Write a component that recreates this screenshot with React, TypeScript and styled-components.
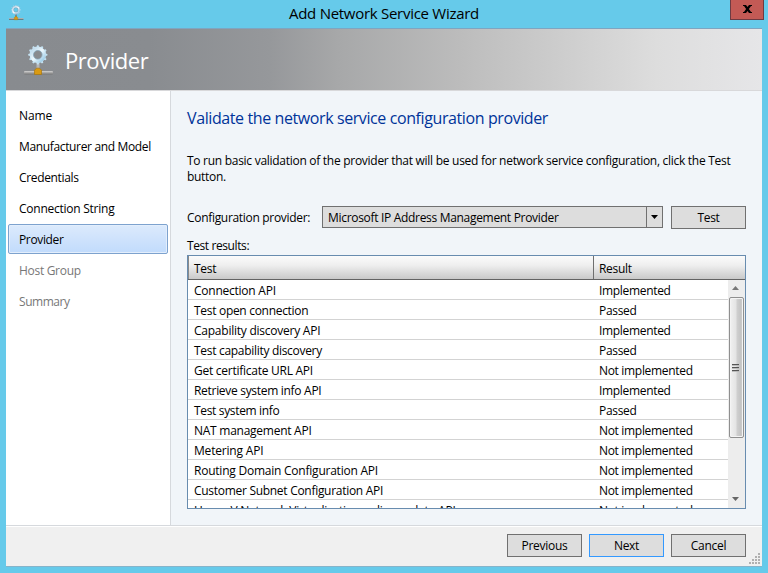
import React from "react";
import styled, { createGlobalStyle, css } from "styled-components";

const GlobalStyle = createGlobalStyle`
  * { box-sizing: border-box; }
  body { margin: 0; background: #66caea; }
  button { font: inherit; letter-spacing: inherit; color: inherit; }
`;

const Window = styled.div`
  width: 768px;
  height: 573px;
  display: flex;
  flex-direction: column;
  background: #66caea;
  padding: 0 6px 6px;
  overflow: hidden;
  font-family: "Open Sans", "Noto Sans", sans-serif;
  font-size: 12px;
  line-height: 16px;
  letter-spacing: -0.3px;
  color: #000;
`;

const Label = styled.span<{ $track?: number }>`
  white-space: pre;
  letter-spacing: ${(p) => p.$track ?? -0.3}px;
`;

const TitleBar = styled.header`
  flex: none;
  height: 28px;
  display: grid;
  grid-template-columns: 34px 1fr 34px;
  margin: 0 -2px 0 0;
`;

const TitleIcon = styled.div`
  padding: 4px 0 0 1px;
  svg { display: block; }
`;

const WindowTitle = styled.h1`
  margin: 0;
  font-size: 15px;
  font-weight: 400;
  line-height: 27px;
  text-align: center;
  padding-right: 2px;
`;

const CloseButton = styled.button`
  width: 34px;
  height: 20px;
  padding: 0 0 2px;
  border: 1px solid #6d3b42;
  border-top: 0;
  background: #c35a55;
  display: flex;
  align-items: center;
  justify-content: center;
`;

const Banner = styled.div`
  flex: none;
  height: 63px;
  border-top: 1px solid #7fa5c0;
  border-bottom: 1px solid #d8d8da;
  background: linear-gradient(90deg, #888b8f 0%, #898c90 19%, #96989b 35%, #a7a8a9 44%, #bcbcbc 60%, #cfcfcf 75%, #dddddd 86%, #e6e6e8 100%);
  display: flex;
  align-items: center;
  padding-left: 16px;
  svg { display: block; flex: none; }
`;

const BannerTitle = styled.h2`
  margin: 1px 0 0 11px;
  font-size: 22px;
  font-weight: 400;
  line-height: 29px;
  color: #fff;
`;

const Body = styled.div`
  flex: none;
  height: 434px;
  display: flex;
`;

const Sidebar = styled.nav`
  flex: none;
  width: 165px;
  padding: 9px 2px 0;
  background: #fff;
  border-right: 1px solid #d6d9dd;
  display: flex;
  flex-direction: column;
  gap: 1px;
`;

const Step = styled.div<{ $state?: "active" | "pending" }>`
  height: 30px;
  padding: 7px 0 0 10px;
  border: 1px solid transparent;
  border-radius: 2px;
  ${(p) => p.$state === "pending" && css`color: #777;`}
  ${(p) => p.$state === "active" && css`
    border-color: #7da2ce;
    background: linear-gradient(#dceafc, #c1dbfc);
    box-shadow: inset 0 0 0 1px #e3eefc;
  `}
`;

const Content = styled.main`
  flex: 1;
  min-width: 0;
  padding: 0 16px;
  background: #f1f5f9;
  display: flex;
  flex-direction: column;
`;

const PageTitle = styled.h3`
  margin: 15px 0 0;
  font-size: 16px;
  font-weight: 400;
  line-height: 24px;
  color: #003399;
`;

const Intro = styled.p`
  margin: 23px 0 0;
`;

const FormRow = styled.div`
  margin-top: 21px;
  height: 23px;
  display: flex;
  align-items: flex-start;
`;

const FieldLabel = styled.div`
  width: 135px;
  padding-top: 4px;
`;

const Combo = styled.div`
  width: 341px;
  height: 22px;
  margin-right: 8px;
  border: 1px solid #707070;
  background: #dddddd;
  display: flex;
`;

const ComboValue = styled.div`
  flex: 1;
  padding: 3px 0 0 5px;
  line-height: 16px;
`;

const ComboArrow = styled.div`
  width: 16px;
  border-left: 1px solid #707070;
  padding: 8px 0 0 4px;
  svg { display: block; }
`;

const PushButton = styled.button<{ $primary?: boolean }>`
  width: 75px;
  height: 23px;
  padding: 0;
  border: 1px solid ${(p) => (p.$primary ? "#3399ff" : "#707070")};
  background: #dddddd;
  line-height: 20px;
`;

const ResultsLabel = styled.div`
  margin-top: 9px;
  line-height: 16px;
`;

const Table = styled.div`
  margin-top: 1px;
  height: 254px;
  border: 1px solid #688caf;
  background: #fff;
  display: flex;
  flex-direction: column;
  overflow: hidden;
`;

const TableHead = styled.div`
  flex: none;
  height: 24px;
  display: grid;
  grid-template-columns: 406px 1fr;
  border-bottom: 1px solid #636363;
  background: linear-gradient(#fbfbfb, #efefef 40%, #c9c9c9);
`;

const HeadCell = styled.div<{ $divided?: boolean }>`
  padding: 5px 0 0 5px;
  margin-left: ${(p) => (p.$divided ? -1 : 0)}px;
  border-left: 1px solid ${(p) => (p.$divided ? "#6f6f6f" : "#8a8a8a")};
`;

const TableBody = styled.div`
  flex: 1;
  min-height: 0;
  display: flex;
`;

const Rows = styled.div`
  flex: 1;
  overflow: hidden;
`;

const ResultRow = styled.div`
  height: 20px;
  display: grid;
  grid-template-columns: 405px 1fr;
  border-bottom: 1px solid #d3d3d3;
  line-height: 16px;
  padding: 3px 0 0 6px;
`;

const ScrollTrack = styled.div`
  flex: none;
  width: 17px;
  background: #ededed;
  display: flex;
  flex-direction: column;
  align-items: flex-start;
  padding-top: 6px;
  svg { display: block; flex: none; }
  > svg { margin-left: 4px; }
`;

const ScrollThumb = styled.div`
  width: 15px;
  height: 141px;
  margin: 7px 0 59px 1px;
  border: 1px solid #8f8f8f;
  border-radius: 2px;
  box-shadow: inset 0 0 0 1px #f4f4f4;
  background: linear-gradient(90deg, #f1f1f1 0%, #e4e4e4 45%, #cfcfcf 55%, #c3c3c3 85%, #dcdcdc 100%);
  display: flex;
  align-items: center;
  padding-left: 2px;
`;

const Footer = styled.footer`
  flex: none;
  height: 42px;
  border-top: 1px solid #d6d9dd;
  border-bottom: 1px solid #86b4ca;
  background: #f0f0f0;
  box-shadow: inset 0 1px 0 #fff;
  display: flex;
  justify-content: flex-end;
  gap: 7px;
  padding: 8px 2px 0 0;
`;

const SizeGrip = styled.svg`
  display: block;
  align-self: flex-end;
  margin: 0 0 2px -4px;
`;

function GearNetworkIcon({ large }: { large?: boolean }) {
  const teeth = Array.from({ length: 12 }, (_, i) => i * 30);
  return (
    <svg width={large ? 32 : 18} height={large ? 34 : 17} viewBox="0 0 32 34">
      <defs>
        <linearGradient id={large ? "gearL" : "gearS"} x1="0" y1="0" x2="1" y2="1">
          <stop offset="0" stopColor="#b7d6ea" />
          <stop offset=".5" stopColor="#eef8fd" />
          <stop offset="1" stopColor="#8fc6e6" />
        </linearGradient>
        <linearGradient id={large ? "pipeL" : "pipeS"} x1="0" y1="0" x2="0" y2="1">
          <stop offset="0" stopColor="#d2d2d2" />
          <stop offset="1" stopColor={large ? "#777" : "#555"} />
        </linearGradient>
      </defs>
      <rect x="14.5" y="19" width="3" height="10" fill={large ? "#b4b6b8" : "#6d7a80"} />
      <g fill="#c4e0f0">
        {teeth.map((a) => (
          <path key={a} d="M14 6L15 2.2H16.6L17.6 6Z" transform={`rotate(${a} 15.8 11.8)`} />
        ))}
      </g>
      <circle cx="15.8" cy="11.8" r="6.2" fill="none" stroke={large ? "#c9e5f4" : "#86aabd"} strokeWidth="4" />
      <circle cx="15.8" cy="11.8" r="6.4" fill="none" stroke={`url(#${large ? "gearL" : "gearS"})`} strokeWidth="3" />
      <circle cx="15.8" cy="11.8" r="4.3" fill="none" stroke="#7f9cb0" strokeWidth=".7" />
      <rect x="2" y="28" width="29" height="3.4" rx="1" fill={`url(#${large ? "pipeL" : "pipeS"})`} />
      <path d="M12.5 31.5V27.2L14.5 25.2H17.5L19.5 27.2V31.5Z" fill="#d99a12" stroke="#a87510" strokeWidth=".7" />
    </svg>
  );
}

const steps: { name: string; track?: number; state?: "active" | "pending" }[] = [
  { name: "Name", track: -0.1 },
  { name: "Manufacturer and Model", track: -0.35 },
  { name: "Credentials", track: -0.35 },
  { name: "Connection String", track: -0.25 },
  { name: "Provider", track: -0.35, state: "active" },
  { name: "Host Group", state: "pending" },
  { name: "Summary", track: -0.45, state: "pending" },
];

const results: [string, string, number?][] = [
  ["Connection API", "Implemented", -0.24],
  ["Test open connection", "Passed"],
  ["Capability discovery API", "Implemented", -0.24],
  ["Test capability discovery", "Passed"],
  ["Get certificate URL API", "Not implemented", -0.26],
  ["Retrieve system info API", "Implemented"],
  ["Test system info", "Passed", -0.34],
  ["NAT management API", "Not implemented", -0.26],
  ["Metering API", "Not implemented", -0.19],
  ["Routing Domain Configuration API", "Not implemented", -0.23],
  ["Customer Subnet Configuration API", "Not implemented", -0.29],
  ["Hyper-V Network Virtualization policy update API", "Not implemented", -0.22],
];

export default function App() {
  return (
    <>
      <GlobalStyle />
      <Window>
        <TitleBar>
          <TitleIcon><GearNetworkIcon /></TitleIcon>
          <WindowTitle><Label $track={-0.28}>Add Network Service Wizard</Label></WindowTitle>
          <CloseButton aria-label="Close">
            <svg width="9" height="8" viewBox="0 0 9 8" fill="#000">
              <path d="M0 0H3L4.5 2L6 0H9V1H8L5.9 4L8 7H9V8H6L4.5 6L3 8H0V7H1L3.1 4L1 1H0Z" />
            </svg>
          </CloseButton>
        </TitleBar>
        <Banner>
          <GearNetworkIcon large />
          <BannerTitle><Label $track={-0.45}>Provider</Label></BannerTitle>
        </Banner>
        <Body>
          <Sidebar>
            {steps.map((s) => (
              <Step key={s.name} $state={s.state}><Label $track={s.track}>{s.name}</Label></Step>
            ))}
          </Sidebar>
          <Content>
            <PageTitle><Label $track={-0.4}>Validate the network service configuration provider</Label></PageTitle>
            <Intro>
              <Label $track={-0.28}>To run basic validation of the provider that will be used for network service configuration, click the Test</Label>
              <br />
              <Label>button.</Label>
            </Intro>
            <FormRow>
              <FieldLabel><Label $track={-0.31}>Configuration provider:</Label></FieldLabel>
              <Combo>
                <ComboValue><Label $track={-0.31}>Microsoft IP Address Management Provider</Label></ComboValue>
                <ComboArrow>
                  <svg width="7" height="4" viewBox="0 0 7 4"><path d="M0 0H7L3.5 4Z" /></svg>
                </ComboArrow>
              </Combo>
              <PushButton>Test</PushButton>
            </FormRow>
            <ResultsLabel><Label $track={-0.4}>Test results:</Label></ResultsLabel>
            <Table>
              <TableHead>
                <HeadCell>Test</HeadCell>
                <HeadCell $divided>Result</HeadCell>
              </TableHead>
              <TableBody>
                <Rows>
                  {results.map(([test, result, track]) => (
                    <ResultRow key={test}>
                      <Label $track={track}>{test}</Label>
                      <Label $track={-0.32}>{result}</Label>
                    </ResultRow>
                  ))}
                </Rows>
                <ScrollTrack>
                  <svg width="7" height="4" viewBox="0 0 7 4"><path d="M0 4H7L3.5 0Z" fill="#777" /></svg>
                  <ScrollThumb>
                    <svg width="7" height="8" viewBox="0 0 7 8">
                      <path d="M0 .5H7M0 3.5H7M0 6.5H7" stroke="#555" />
                      <path d="M0 1.5H7M0 4.5H7M0 7.5H7" stroke="#bbb" />
                    </svg>
                  </ScrollThumb>
                  <svg width="7" height="4" viewBox="0 0 7 4"><path d="M0 0H7L3.5 4Z" fill="#666" /></svg>
                </ScrollTrack>
              </TableBody>
            </Table>
          </Content>
        </Body>
        <Footer>
          <PushButton>Previous</PushButton>
          <PushButton $primary>Next</PushButton>
          <PushButton>Cancel</PushButton>
          <SizeGrip width="11" height="11" viewBox="0 0 11 11" fill="#b0b0b0">
            <path d="M9 0h2v2h-2zM6 3h2v2H6zM9 3h2v2H9zM3 6h2v2H3zM6 6h2v2H6zM9 6h2v2H9zM0 9h2v2H0zM3 9h2v2H3zM6 9h2v2H6zM9 9h2v2H9z" />
          </SizeGrip>
        </Footer>
      </Window>
    </>
  );
}
